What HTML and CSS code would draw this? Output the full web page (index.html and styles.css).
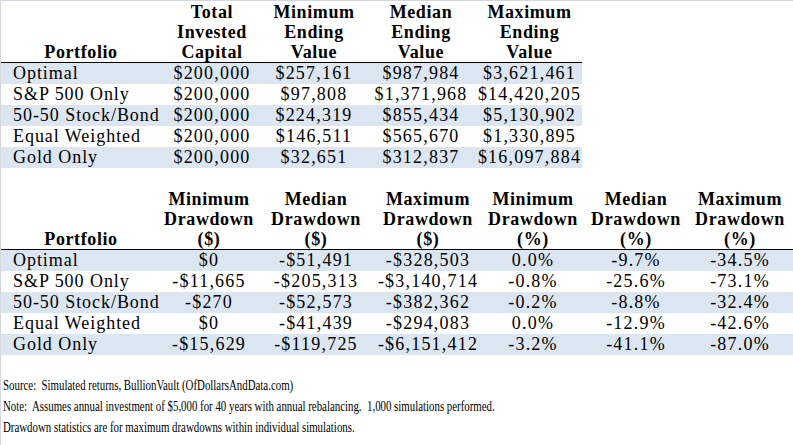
FILE: index.html
```html
<!DOCTYPE html>
<html>
<head>
<meta charset="utf-8">
<link rel="stylesheet" href="styles.css">
</head>
<body>
<div class="page">
  <table class="tbl tbl-a">
    <colgroup>
      <col class="c-name"><col class="w102"><col class="w102"><col class="w112"><col class="w105">
    </colgroup>
    <thead>
      <tr>
        <th>Portfolio</th>
        <th>Total<br>Invested<br>Capital</th>
        <th>Minimum<br>Ending<br>Value</th>
        <th>Median<br>Ending<br>Value</th>
        <th>Maximum<br>Ending<br>Value</th>
      </tr>
    </thead>
    <tbody>
      <tr class="band"><td>Optimal</td><td>$200,000</td><td>$257,161</td><td>$987,984</td><td>$3,621,461</td></tr>
      <tr><td>S&amp;P 500 Only</td><td>$200,000</td><td>$97,808</td><td>$1,371,968</td><td>$14,420,205</td></tr>
      <tr class="band"><td>50-50 Stock/Bond</td><td>$200,000</td><td>$224,319</td><td>$855,434</td><td>$5,130,902</td></tr>
      <tr><td>Equal Weighted</td><td>$200,000</td><td>$146,511</td><td>$565,670</td><td>$1,330,895</td></tr>
      <tr class="band"><td>Gold Only</td><td>$200,000</td><td>$32,651</td><td>$312,837</td><td>$16,097,884</td></tr>
    </tbody>
  </table>

  <table class="tbl tbl-b">
    <colgroup>
      <col class="c-name"><col class="w96"><col class="w118"><col class="w106"><col class="w104"><col class="w102"><col class="w106">
    </colgroup>
    <thead>
      <tr>
        <th>Portfolio</th>
        <th>Minimum<br>Drawdown<br>($)</th>
        <th>Median<br>Drawdown<br>($)</th>
        <th>Maximum<br>Drawdown<br>($)</th>
        <th>Minimum<br>Drawdown<br>(%)</th>
        <th>Median<br>Drawdown<br>(%)</th>
        <th>Maximum<br>Drawdown<br>(%)</th>
      </tr>
    </thead>
    <tbody>
      <tr class="band"><td>Optimal</td><td>$0</td><td>-$51,491</td><td>-$328,503</td><td>0.0%</td><td>-9.7%</td><td>-34.5%</td></tr>
      <tr><td>S&amp;P 500 Only</td><td>-$11,665</td><td>-$205,313</td><td>-$3,140,714</td><td>-0.8%</td><td>-25.6%</td><td>-73.1%</td></tr>
      <tr class="band"><td>50-50 Stock/Bond</td><td>-$270</td><td>-$52,573</td><td>-$382,362</td><td>-0.2%</td><td>-8.8%</td><td>-32.4%</td></tr>
      <tr><td>Equal Weighted</td><td>$0</td><td>-$41,439</td><td>-$294,083</td><td>0.0%</td><td>-12.9%</td><td>-42.6%</td></tr>
      <tr class="band"><td>Gold Only</td><td>-$15,629</td><td>-$119,725</td><td>-$6,151,412</td><td>-3.2%</td><td>-41.1%</td><td>-87.0%</td></tr>
    </tbody>
  </table>

  <div class="notes">
    <p>Source:&nbsp; Simulated returns, BullionVault (OfDollarsAndData.com)</p>
    <p>Note:&nbsp; Assumes annual investment of $5,000 for 40 years with annual rebalancing.&nbsp; 1,000 simulations performed.</p>
    <p>Drawdown statistics are for maximum drawdowns within individual simulations.</p>
  </div>
</div>
</body>
</html>
```

FILE: styles.css
```css
html, body {
  margin: 0;
  padding: 0;
  background: #ffffff;
}

.page {
  width: 792px;
  height: 444px;
  border-top: 1px solid #d3d6da;
  border-left: 1px solid #d3d6da;
  color: #000000;
  font-family: "Liberation Serif", serif;
  overflow: hidden;
}

.tbl {
  border-collapse: collapse;
  table-layout: fixed;
  font-family: "Liberation Serif", serif;
}

.tbl-a { width: 581px; }
.tbl-b { width: 792px; margin-top: 20px; }

.c-name { width: 160px; }
.w96 { width: 96px; }
.w102 { width: 102px; }
.w104 { width: 104px; }
.w105 { width: 105px; }
.w106 { width: 106px; }
.w112 { width: 112px; }
.w118 { width: 118px; }

.tbl th {
  font-family: "Liberation Serif", serif;
  font-weight: bold;
  font-size: 18px;
  letter-spacing: 0.6px;
  line-height: 20px;
  height: 61px;
  padding: 0;
  vertical-align: bottom;
  text-align: center;
  border-bottom: 1px solid #000000;
  white-space: nowrap;
}

.tbl td {
  font-family: "Liberation Serif", serif;
  font-size: 18px;
  letter-spacing: 1.2px;
  line-height: 21px;
  height: 21px;
  padding: 0;
  text-align: center;
  white-space: nowrap;
}

.tbl td:first-child {
  text-align: left;
  padding-left: 12px;
  letter-spacing: 0.95px;
}

.band td { background: #dce6f1; }

.notes {
  margin-top: 20px;
  padding-left: 2px;
}

.notes p {
  margin: 0;
  font-family: "Liberation Serif", serif;
  font-size: 14px;
  line-height: 21px;
  white-space: nowrap;
  transform: scaleX(0.775);
  transform-origin: left center;
}
```
